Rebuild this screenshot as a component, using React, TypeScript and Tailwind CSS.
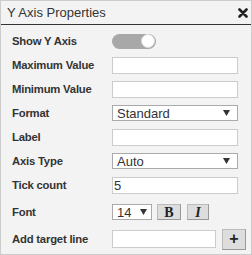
import { ReactNode } from 'react';

const Row = ({ label, children, className = 'h-[24px]' }: { label: string; children: ReactNode; className?: string }) => (
  <div className={`flex items-center ${className}`}>
    <div className="w-[111px] shrink-0 whitespace-nowrap pl-[11px] text-[11.3px] font-bold tracking-[-0.2px] text-[#333]">
      {label}
    </div>
    {children}
  </div>
);

const TextBox = ({ value = '', className = 'w-[126px]' }: { value?: string; className?: string }) => (
  <div className={`flex h-[17px] items-center border border-[#ccc] bg-white pl-[1px] text-[13px] leading-none text-[#333] ${className}`}>
    {value}
  </div>
);

const Arrow = () => (
  <svg width="7" height="6" viewBox="0 0 7 6" className="shrink-0">
    <path d="M0 0 H7 L3.5 6 Z" fill="#333" />
  </svg>
);

const Select = ({ value }: { value: string }) => (
  <div className="flex h-[16px] w-[126px] items-center justify-between border border-[#aaa] bg-white pl-[4px] pr-[7px] text-[13px] leading-none text-[#333]">
    <span>{value}</span>
    <Arrow />
  </div>
);

const GrayButton = ({ children, className = '' }: { children: ReactNode; className?: string }) => (
  <div
    className={`flex items-center justify-center border border-[#bbb] border-r-[#999] border-b-[#999] bg-[#ddd] text-[#222] ${className}`}
  >
    {children}
  </div>
);

export default function App() {
  return (
    <div className="h-[255px] w-[252px] border border-[#ccc] bg-[#f3f3f3] font-['Liberation_Sans',Arial,sans-serif] text-[#333]">
      <div className="flex h-[24px] items-center justify-between border-b border-[#333] pl-[6px] pr-[3px]">
        <span className="text-[13px]">Y Axis Properties</span>
        <svg width="10" height="10" viewBox="0 0 10 10">
          <path d="M1.5 1.5 L8.5 8.5 M8.5 1.5 L1.5 8.5" stroke="#222" strokeWidth="2.6" strokeLinecap="round" />
        </svg>
      </div>

      <div className="pt-[4px]">
        <Row label="Show Y Axis">
          <div className="flex h-[15px] w-[44px] items-center justify-end rounded-full bg-[#a8a8a8] pr-[1px]">
            <div className="h-[14px] w-[14px] rounded-full border border-[#ddd] bg-white" />
          </div>
        </Row>
        <Row label="Maximum Value">
          <TextBox />
        </Row>
        <Row label="Minimum Value">
          <TextBox />
        </Row>
        <Row label="Format">
          <Select value="Standard" />
        </Row>
        <Row label="Label">
          <TextBox />
        </Row>
        <Row label="Axis Type">
          <Select value="Auto" />
        </Row>
        <Row label="Tick count">
          <TextBox value="5" />
        </Row>
        <Row label="Font" className="h-[30px]">
          <div className="flex items-center gap-[5px]">
            <div className="flex h-[16px] w-[40px] items-center justify-between border border-[#aaa] bg-white pl-[4px] pr-[4px] text-[13px] leading-none text-[#333]">
              <span>14</span>
              <Arrow />
            </div>
            <GrayButton className="h-[16px] w-[24px] font-['Liberation_Serif',serif] text-[14px] font-bold">B</GrayButton>
            <GrayButton className="ml-[1px] h-[16px] w-[22px] font-['Liberation_Serif',serif] text-[14px] italic font-bold">I</GrayButton>
          </div>
        </Row>
        <Row label="Add target line">
          <div className="flex items-center gap-[6px]">
            <TextBox className="h-[18px] w-[104px]" />
            <GrayButton className="h-[21px] w-[24px] text-[16px] font-bold leading-none">+</GrayButton>
          </div>
        </Row>
      </div>
    </div>
  );
}
